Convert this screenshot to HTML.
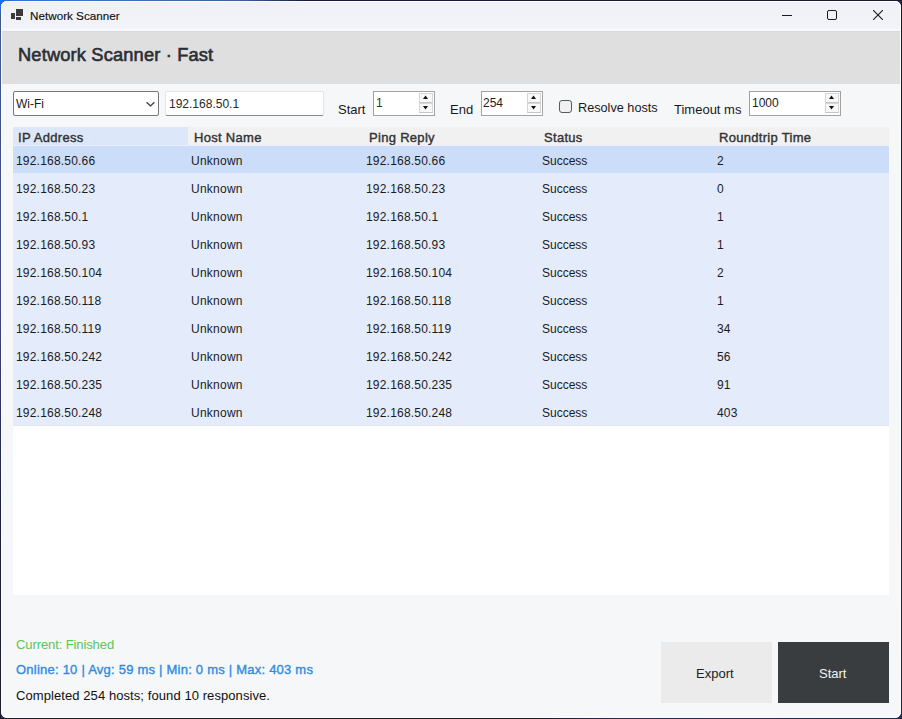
<!DOCTYPE html>
<html><head><meta charset="utf-8">
<style>
*{box-sizing:border-box;margin:0;padding:0}
html,body{width:902px;height:719px;overflow:hidden;background:#1d1d3a}
body{position:relative;font-family:"Liberation Sans",sans-serif;color:#1a1a1a}
.a{position:absolute;white-space:nowrap}
#desk{position:absolute;left:0;top:0;width:902px;height:719px;background:linear-gradient(180deg,#2b2a55 0%,#3f4585 40%,#2a2f55 100%)}
#win{position:absolute;left:1px;top:1px;width:900px;height:717px;background:#f6f7f9;border-radius:6px;overflow:hidden}
#edge{position:absolute;left:1px;top:1px;width:900px;height:717px;border-radius:6px;border:1px solid #fcfdff;pointer-events:none}
#title{position:absolute;left:0;top:0;width:900px;height:30px;background:linear-gradient(180deg,#f0f1f7 0px,#f2f3f8 27px,#f7f8fb 28px,#f7f8fb 30px)}
#hdr{position:absolute;left:0;top:30px;width:900px;height:53px;background:linear-gradient(180deg,#d9dadd 0px,#d9dadd 1px,#dfdfdf 1px)}
.t12{font-size:12px;line-height:14px}
.t13{font-size:13px;line-height:16px}
.box{position:absolute;background:#fff}
.spin{position:absolute;background:#fff;border:1px solid #a3a3a3}
.sb{position:absolute;width:14px;height:10px;background:#f8f8f8;border:1px solid #d6d6d6;border-bottom-color:#c6c6c6}
.grid{position:absolute;left:12px;top:126px;width:876px;height:468px;background:#fff;overflow:hidden}
.hc{position:absolute;top:0;height:18px;background:#f1f1f2}
.hl{position:absolute;left:0;top:18px;width:876px;height:1px;background:rgba(252,250,253,0.6);z-index:2}
.row{position:absolute;left:0;width:876px;height:28px;background:#e4ecfc}
.row.sel{background:#cbddf9}
.cell{position:absolute;font-size:12px;line-height:16px;top:8px;color:#1b1b1b}
.cell.n{letter-spacing:0.2px}
.cell.u{letter-spacing:0.25px}
.hd{position:absolute;font-size:13px;line-height:16px;top:3px;color:#333;letter-spacing:0.3px;-webkit-text-stroke:0.4px #333}
.sm{-webkit-text-stroke:0.35px currentColor}
.sm2{-webkit-text-stroke:0.6px currentColor}
</style></head><body>
<div id="desk"></div>
<div class="a" style="left:0;top:0;width:1px;height:719px;background:linear-gradient(180deg,#2a6fe0 0%,#3d5a8a 2%,#414785 42%,#1c2340 70%,#1a1d2c 100%)"></div>
<div class="a" style="left:0;top:0;width:902px;height:1px;background:linear-gradient(90deg,#2a72e6 0%,#3f6fb4 15%,#3a5f98 27%,#181838 34%,#1a1a2c 100%)"></div>
<div class="a" style="left:901px;top:0;width:1px;height:719px;background:linear-gradient(180deg,#17171f 0%,#1f2236 50%,#1d2a48 100%)"></div>
<div class="a" style="left:0;top:718px;width:902px;height:1px;background:linear-gradient(90deg,#1c1c28 0%,#1e1e26 60%,#2a2752 70%,#1d2a48 100%)"></div>
<div class="a" style="left:0;top:0;width:12px;height:12px;background:radial-gradient(circle at 0 0,#1a6cf0 0%,#2a6ad0 60%,rgba(42,106,208,0) 100%)"></div>
<div id="win">
  <div id="title">
    <svg class="a" style="left:10px;top:8px" width="13" height="12" viewBox="0 0 13 12">
      <rect x="0" y="4" width="4" height="6" fill="#3a3a3a"/>
      <rect x="5" y="0" width="7" height="7" fill="#3a3a3a"/>
      <rect x="5" y="8" width="5" height="3" fill="#3a3a3a"/>
    </svg>
    <div class="a" style="left:29px;top:8px;font-size:11.7px;line-height:14px;color:#111;-webkit-text-stroke:0.15px #111">Network Scanner</div>
    <div class="a" style="left:781px;top:14px;width:10px;height:1px;background:#1a1a1a"></div>
    <div class="a" style="left:826px;top:9px;width:10px;height:10px;border:1px solid #1a1a1a;border-radius:2px"></div>
    <svg class="a" style="left:872px;top:9px" width="10" height="10" viewBox="0 0 10 10">
      <path d="M0 0L10 10M10 0L0 10" stroke="#1a1a1a" stroke-width="1.1"/>
    </svg>
  </div>
  <div id="hdr">
    <div class="a sm2" style="left:17px;top:13px;font-size:18.3px;line-height:22px;letter-spacing:0.15px;color:#2b2e35">Network Scanner · Fast</div>
  </div>

  <div class="box" style="left:12px;top:90px;width:146px;height:25px;border:1px solid #767676;border-radius:2px"></div>
  <div class="a t12" style="left:15px;top:96px">Wi-Fi</div>
  <svg class="a" style="left:145px;top:100px" width="10" height="7" viewBox="0 0 10 7"><path d="M0.6 1.2L4.5 5L8.4 1.2" stroke="#3a3a3a" fill="none" stroke-width="1.25"/></svg>

  <div class="box" style="left:164px;top:90px;width:159px;height:25px;border:1px solid #e6e6e6;border-bottom:1px solid #8a8a8a;border-radius:2px"></div>
  <div class="a t12" style="left:168px;top:96px;color:#2a2a2a">192.168.50.1</div>

  <div class="a t13" style="left:337px;top:101px">Start</div>
  <div class="spin" style="left:372px;top:90px;width:62px;height:25px">
    <div class="sb" style="left:45px;top:1px"></div><div class="sb" style="left:45px;top:11px"></div>
    <svg class="a" style="left:49px;top:3px" width="5" height="4" viewBox="0 0 5 4"><path d="M0 4L2.5 0.5L5 4Z" fill="#111"/></svg>
    <svg class="a" style="left:49px;top:14px" width="5" height="4" viewBox="0 0 5 4"><path d="M0 0L5 0L2.5 3.5Z" fill="#111"/></svg>
  </div>
  <div class="a t12" style="left:375px;top:95px;color:#333">1</div>

  <div class="a t13" style="left:449px;top:101px">End</div>
  <div class="spin" style="left:480px;top:90px;width:62px;height:25px">
    <div class="sb" style="left:45px;top:1px"></div><div class="sb" style="left:45px;top:11px"></div>
    <svg class="a" style="left:49px;top:3px" width="5" height="4" viewBox="0 0 5 4"><path d="M0 4L2.5 0.5L5 4Z" fill="#111"/></svg>
    <svg class="a" style="left:49px;top:14px" width="5" height="4" viewBox="0 0 5 4"><path d="M0 0L5 0L2.5 3.5Z" fill="#111"/></svg>
  </div>
  <div class="a t12" style="left:482px;top:95px;color:#222">254</div>

  <div class="a" style="left:558px;top:99px;width:13px;height:13px;border:1px solid #5a5a5a;border-radius:3px;background:#f1f1f1"></div>
  <div class="a t13" style="left:577px;top:99px;font-size:12.7px">Resolve hosts</div>

  <div class="a t13" style="left:673px;top:101px">Timeout ms</div>
  <div class="spin" style="left:748px;top:90px;width:92px;height:25px">
    <div class="sb" style="left:75px;top:1px"></div><div class="sb" style="left:75px;top:11px"></div>
    <svg class="a" style="left:79px;top:3px" width="5" height="4" viewBox="0 0 5 4"><path d="M0 4L2.5 0.5L5 4Z" fill="#111"/></svg>
    <svg class="a" style="left:79px;top:14px" width="5" height="4" viewBox="0 0 5 4"><path d="M0 0L5 0L2.5 3.5Z" fill="#111"/></svg>
  </div>
  <div class="a t12" style="left:751px;top:95px;color:#222">1000</div>

  <div class="grid">
    <div class="hc" style="left:0;width:175px;background:#dce8fa"></div>
    <div class="hc" style="left:175px;width:701px"></div>
    <div class="hl"></div>
    <div class="hd" style="left:5px">IP Address</div>
    <div class="hd" style="left:181px">Host Name</div>
    <div class="hd" style="left:356px">Ping Reply</div>
    <div class="hd" style="left:531px">Status</div>
    <div class="hd" style="left:706px">Roundtrip Time</div>
<div class="row sel" style="top:18px"><div class="cell n" style="left:3px">192.168.50.66</div><div class="cell u" style="left:178px">Unknown</div><div class="cell n" style="left:353px">192.168.50.66</div><div class="cell" style="left:529px">Success</div><div class="cell n" style="left:704px">2</div></div>
<div class="row" style="top:46px"><div class="cell n" style="left:3px">192.168.50.23</div><div class="cell u" style="left:178px">Unknown</div><div class="cell n" style="left:353px">192.168.50.23</div><div class="cell" style="left:529px">Success</div><div class="cell n" style="left:704px">0</div></div>
<div class="row" style="top:74px"><div class="cell n" style="left:3px">192.168.50.1</div><div class="cell u" style="left:178px">Unknown</div><div class="cell n" style="left:353px">192.168.50.1</div><div class="cell" style="left:529px">Success</div><div class="cell n" style="left:704px">1</div></div>
<div class="row" style="top:102px"><div class="cell n" style="left:3px">192.168.50.93</div><div class="cell u" style="left:178px">Unknown</div><div class="cell n" style="left:353px">192.168.50.93</div><div class="cell" style="left:529px">Success</div><div class="cell n" style="left:704px">1</div></div>
<div class="row" style="top:130px"><div class="cell n" style="left:3px">192.168.50.104</div><div class="cell u" style="left:178px">Unknown</div><div class="cell n" style="left:353px">192.168.50.104</div><div class="cell" style="left:529px">Success</div><div class="cell n" style="left:704px">2</div></div>
<div class="row" style="top:158px"><div class="cell n" style="left:3px">192.168.50.118</div><div class="cell u" style="left:178px">Unknown</div><div class="cell n" style="left:353px">192.168.50.118</div><div class="cell" style="left:529px">Success</div><div class="cell n" style="left:704px">1</div></div>
<div class="row" style="top:186px"><div class="cell n" style="left:3px">192.168.50.119</div><div class="cell u" style="left:178px">Unknown</div><div class="cell n" style="left:353px">192.168.50.119</div><div class="cell" style="left:529px">Success</div><div class="cell n" style="left:704px">34</div></div>
<div class="row" style="top:214px"><div class="cell n" style="left:3px">192.168.50.242</div><div class="cell u" style="left:178px">Unknown</div><div class="cell n" style="left:353px">192.168.50.242</div><div class="cell" style="left:529px">Success</div><div class="cell n" style="left:704px">56</div></div>
<div class="row" style="top:242px"><div class="cell n" style="left:3px">192.168.50.235</div><div class="cell u" style="left:178px">Unknown</div><div class="cell n" style="left:353px">192.168.50.235</div><div class="cell" style="left:529px">Success</div><div class="cell n" style="left:704px">91</div></div>
<div class="row" style="top:270px"><div class="cell n" style="left:3px">192.168.50.248</div><div class="cell u" style="left:178px">Unknown</div><div class="cell n" style="left:353px">192.168.50.248</div><div class="cell" style="left:529px">Success</div><div class="cell n" style="left:704px">403</div></div>
<div class="a" style="left:0;top:298px;width:876px;height:1px;background:#e7e6ec"></div>
  </div>

  <div class="a t13" style="left:15px;top:636px;color:#58c658;letter-spacing:-0.1px">Current: Finished</div>
  <div class="a t13 sm" style="left:15px;top:661px;color:#2e8ae0;letter-spacing:0.23px">Online: 10 | Avg: 59 ms | Min: 0 ms | Max: 403 ms</div>
  <div class="a t13" style="left:15px;top:687px;color:#111;letter-spacing:0.08px">Completed 254 hosts; found 10 responsive.</div>

  <div class="a" style="left:660px;top:641px;width:111px;height:61px;background:#ebebeb"></div>
  <div class="a t13" style="left:695px;top:665px;color:#222">Export</div>
  <div class="a" style="left:777px;top:641px;width:111px;height:61px;background:#3a3d40"></div>
  <div class="a t13" style="left:818px;top:665px;color:#f2f2f2">Start</div>
</div>
<div id="edge"></div>
</body></html>
